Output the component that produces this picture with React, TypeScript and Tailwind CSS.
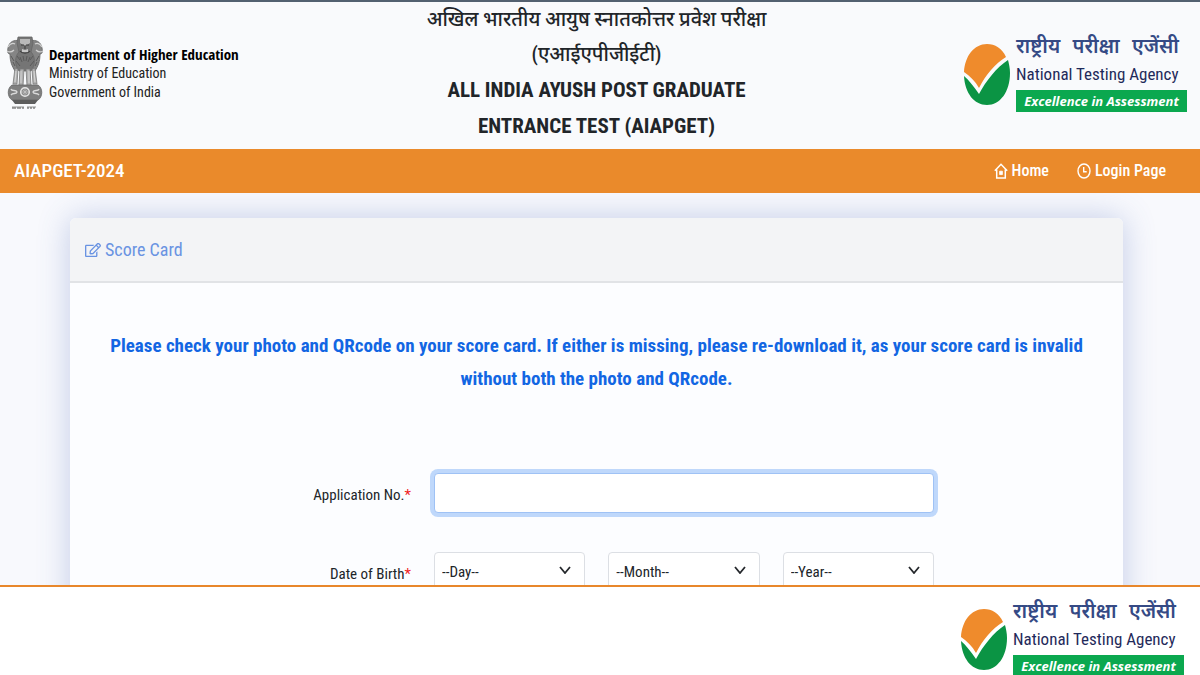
import React from 'react';
import { FaRegEdit } from 'react-icons/fa';

const Emblem: React.FC = () => (
  <svg viewBox="0 0 38 74" className="w-[38px] h-[74px] shrink-0" role="img" aria-label="State Emblem of India">
    {/* side lions */}
    <path d="M14 5C8 3 3 6 2 12c-1 4 0 6 2 6 0 8 2 12 5 17l6-3V8z" fill="#858585" stroke="#5f5f5f" strokeWidth="0.8" />
    <path d="M24 5c6-2 11 1 12 7 1 4 0 6-2 6 0 8-2 12-5 17l-6-3V8z" fill="#858585" stroke="#5f5f5f" strokeWidth="0.8" />
    <path d="M2 11c2-3 5-4 7-3M1 15c3 2 5 1 7-1M36 11c-2-3-5-4-7-3M37 15c-3 2-5 1-7-1" fill="none" stroke="#d2d2d2" strokeWidth="1.2" />
    {/* front lion */}
    <path d="M12 1h14l1 6-2 9c5 5 4 14 0 19H13c-4-5-5-14 0-19l-2-9z" fill="#757575" stroke="#666" strokeWidth="0.8" />
    <path d="M14 3h10v4l-3 2h-4l-3-2z" fill="#b9b9b9" />
    <path d="M15 9h3M20 9h3M19 10v3M14 15c2 3 8 3 10 0" fill="none" stroke="#3f3f3f" strokeWidth="1.1" />
    <path d="M16 13l3 1 3-1v3h-6z" fill="#c8c8c8" />
    <path d="M11 20l3 4M10 25l4 5M27 20l-3 4M28 25l-4 5M17 20l1 5M21 20l-1 5M14 21l2 5M24 21l-2 5M5 20l3 5M33 20l-3 5M7 26l2 4M31 26l-2 4" stroke="#5a5a5a" strokeWidth="1" />
    {/* legs */}
    <path d="M9 32l3 1-1 15H7zM14 33h4l-1 17h-4zM20 33h4l1 17h-4zM26 33l3-1 2 16h-4z" fill="#b0b0b0" stroke="#7a7a7a" strokeWidth="0.8" />
    <path d="M15 35v12M23 35v12M10 35L9 46M28 35l1 11" stroke="#e2e2e2" strokeWidth="0.8" />
    {/* abacus */}
    <path d="M6 49h26c5 3 5 12 0 15H6c-5-3-5-12 0-15z" fill="#7f7f7f" stroke="#666" strokeWidth="0.8" />
    <circle cx="19" cy="56" r="4.3" fill="#8d8d8d" stroke="#e5e5e5" strokeWidth="1.5" />
    <path d="M19 52v8M15 56h8M16.5 53.5l5 5M21.5 53.5l-5 5" stroke="#d5d5d5" strokeWidth="0.5" />
    <path d="M5 53c1 3 5 0 6 3-1 3-4 0-6 3M33 53c-1 3-5 0-6 3 1 3 4 0 6 3" fill="none" stroke="#dadada" strokeWidth="1.4" />
    <path d="M6 64h26l-3 4H9z" fill="#5d5d5d" />
    <path d="M6 71h12M21 71h9" stroke="#767676" strokeWidth="0.8" />
    <path d="M7 71v2M9 71v2M12 71v2M14 71v2M17 71v2M22 71v2M25 71v2M28 71v2" stroke="#6c6c6c" strokeWidth="1.2" />
  </svg>
);

const NtaLogo: React.FC = () => (
  <div className="flex items-start gap-1.5">
    <svg viewBox="0 0 46 61" className="w-[46px] h-[61px] shrink-0 mt-2.5" role="img" aria-label="NTA">
      <path d="M0 28C1 12 10 0 23 0c8 0 15 4 19 13C31 20 22 30 15 44 11 37 6 32 0 28z" fill="#ef8b2c" />
      <path d="M0 32c5 4 10 11 15 18C22 37 32 24 44 16c1 4 2 8 2 13 0 19-10 32-23 32S1 49 0 32z" fill="#0b9444" />
    </svg>
    <div className="flex flex-col whitespace-nowrap">
      <span className="w-[163px] flex justify-between font-['Noto_Sans',sans-serif] font-semibold text-[20px] leading-6 text-[#354a85]">
        <span>राष्ट्रीय</span> <span>परीक्षा</span> <span>एजेंसी</span>
      </span>
      <span className="font-['Roboto_Condensed','Roboto',sans-serif] text-[17px] leading-8 text-[#1f2a5a]">National Testing Agency</span>
      <span className="w-[171px] bg-[#0ba84f] text-center font-['Open_Sans',sans-serif] font-bold italic text-[13px] leading-[22px] text-white">Excellence in Assessment</span>
    </div>
  </div>
);

const HomeIcon: React.FC = () => (
  <svg viewBox="0 0 14 16" className="w-3.5 h-4" fill="none" stroke="currentColor" strokeWidth="1.5" aria-hidden="true">
    <path d="M.8 7.8L7 1.3l6.2 6.5M2.7 6.5V15h8.6V6.5" />
    <path d="M5.6 8.2h2.8v3.4H5.6z" fill="currentColor" strokeWidth="0.8" />
  </svg>
);

const ClockIcon: React.FC = () => (
  <svg viewBox="0 0 14 16" className="w-3.5 h-4" fill="none" stroke="currentColor" strokeWidth="1.4" aria-hidden="true">
    <ellipse cx="7" cy="8" rx="6" ry="7" />
    <path d="M6.7 4v4.7h3" />
  </svg>
);

const App: React.FC = () => {
  const dateFields = [
    { id: "day", label: "--Day--" },
    { id: "month", label: "--Month--" },
    { id: "year", label: "--Year--" }
  ];

  return (
    <div className="h-screen flex flex-col overflow-hidden bg-[#f8f9fd] font-['Roboto_Condensed','Roboto','Noto_Sans',sans-serif] text-[#212529]">
      <header className="shrink-0 grid grid-cols-[1fr_auto_1fr] items-start border-t-2 border-[#536170] bg-[#f9fafc] pl-1.5 pr-[13px] pb-[5px]">
        <div className="flex items-center gap-[5px] pt-[34px]">
          <Emblem />
          <div className="text-[15px] leading-[19px] text-[#222] whitespace-nowrap">
            <p className="font-['Open_Sans_Condensed','Open_Sans',sans-serif] font-bold text-black">Department of Higher Education</p>
            <p className="text-[14px]">Ministry of Education</p>
            <p className="text-[14px]">Government of India</p>
          </div>
        </div>
        <h1 className="text-center font-bold text-[21px] leading-9 whitespace-nowrap">
          <span className="block font-medium text-[20px] leading-[35px]">अखिल भारतीय आयुष स्नातकोत्तर प्रवेश परीक्षा</span>
          <span className="block font-medium text-[20px] leading-[35px]">(एआईएपीजीईटी)</span>
          ALL INDIA AYUSH POST GRADUATE<br />
          ENTRANCE TEST (AIAPGET)
        </h1>
        <div className="flex justify-end pt-8">
          <NtaLogo />
        </div>
      </header>

      <nav className="shrink-0 h-11 flex items-center justify-between bg-[#ea8a2b] pl-3.5 pr-[34px] text-white font-medium">
        <a href="#" className="text-[19px]">AIAPGET-2024</a>
        <div className="flex items-center gap-7 text-[16px]">
          <a href="#" className="flex items-center gap-1"><HomeIcon />Home</a>
          <a href="#" className="flex items-center gap-1"><ClockIcon />Login Page</a>
        </div>
      </nav>

      <main className="flex-1 min-h-0 overflow-hidden pt-[25px] pl-[70px] pr-[77px]">
        <section className="rounded-t-md bg-[#fcfdff] shadow-[0_0_32px_rgba(70,100,180,0.3)]">
          <div className="flex items-center gap-1 h-[65px] px-[15px] rounded-t-md border-b-2 border-[#e1e3e6] bg-[#f3f4f6] text-[#6993e2]">
            <FaRegEdit className="w-4 h-4" />
            <h2 className="text-[18px]">Score Card</h2>
          </div>
          <form className="pt-[46px] pb-20">
            <p className="px-4 text-center font-bold text-[19px] leading-[33px] text-[#1266e3]">
              Please check your photo and QRcode on your score card. If either is missing, please re-download it, as your score card is invalid without both the photo and QRcode.
            </p>
            <div className="flex items-center gap-[23px] mt-[78px]">
              <label htmlFor="application" className="w-[341px] text-right text-[15px] pt-1">
                Application No.<span className="text-[#f01c24]">*</span>
              </label>
              <input id="application" type="text" className="w-[500px] h-10 px-2 rounded-[4px] border border-[#9fc2f5] bg-white outline-none ring-4 ring-[#bfd8fb]" />
            </div>
            <div className="flex items-center gap-[23px] mt-[39px]">
              <label htmlFor="day" className="w-[341px] text-right text-[15px] pt-1">
                Date of Birth<span className="text-[#f01c24]">*</span>
              </label>
              <div className="w-[500px] grid grid-cols-3 gap-[23px]">
                {dateFields.map((f) => (
                  <div key={f.id} className="relative">
                    <select id={f.id} aria-label={f.id} className="w-full h-10 px-[7px] appearance-none rounded-[4px] border border-[#dcdfe4] bg-white text-[15px]">
                      <option>{f.label}</option>
                    </select>
                    <svg viewBox="0 0 12 8" className="absolute right-3.5 top-3.5 w-3 h-2 pointer-events-none" fill="none" stroke="#25282c" strokeWidth="1.8" aria-hidden="true">
                      <path d="M1 1l5 6 5-6" />
                    </svg>
                  </div>
                ))}
              </div>
            </div>
          </form>
        </section>
      </main>

      <footer className="shrink-0 h-[90px] overflow-hidden border-t-2 border-[#e8872b] bg-white flex justify-end items-start pt-3 pr-4">
        <NtaLogo />
      </footer>
    </div>
  );
};

export default App;
